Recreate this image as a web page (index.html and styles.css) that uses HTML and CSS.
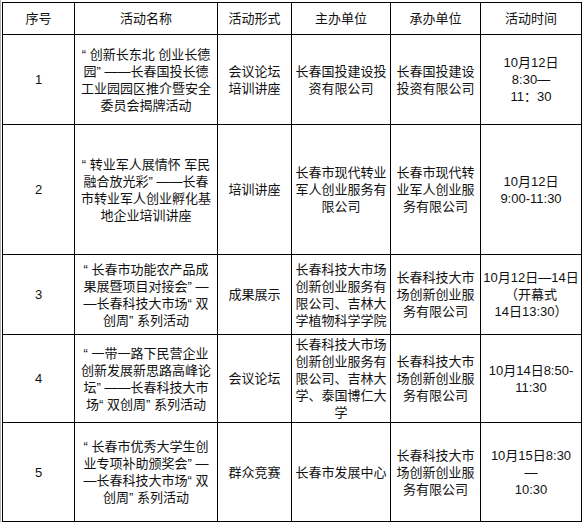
FILE: index.html
```html
<!DOCTYPE html>
<html lang="zh-CN">
<head>
<meta charset="utf-8">
<title>活动安排</title>
<link rel="stylesheet" href="styles.css">
</head>
<body>
<div class="page">
<table class="grid">
  <colgroup>
    <col class="c-no">
    <col class="c-name">
    <col class="c-form">
    <col class="c-host">
    <col class="c-org">
    <col class="c-time">
  </colgroup>
  <tr class="r-head">
    <td>序号</td><td>活动名称</td><td>活动形式</td><td>主办单位</td><td>承办单位</td><td>活动时间</td>
  </tr>
  <tr class="r1">
    <td>1</td>
    <td>“ 创新长东北 创业长德<br>园” ——长春国投长德<br>工业园园区推介暨安全<br>委员会揭牌活动</td>
    <td>会议论坛<br>培训讲座</td>
    <td>长春国投建设投<br>资有限公司</td>
    <td>长春国投建设<br>投资有限公司</td>
    <td>10月12日<br>8:30—<br>11：30</td>
  </tr>
  <tr class="r2">
    <td>2</td>
    <td>“ 转业军人展情怀 军民<br>融合放光彩” ——长春<br>市转业军人创业孵化基<br>地企业培训讲座</td>
    <td>培训讲座</td>
    <td>长春市现代转业<br>军人创业服务有<br>限公司</td>
    <td>长春市现代转<br>业军人创业服<br>务有限公司</td>
    <td>10月12日<br>9:00-11:30</td>
  </tr>
  <tr class="r3">
    <td>3</td>
    <td>“ 长春市功能农产品成<br>果展暨项目对接会” —<br>—长春科技大市场“ 双<br>创周” 系列活动</td>
    <td>成果展示</td>
    <td>长春科技大市场<br>创新创业服务有<br>限公司、吉林大<br>学植物科学学院</td>
    <td>长春科技大市<br>场创新创业服<br>务有限公司</td>
    <td>10月12日—14日<br>（开幕式<br>14日13:30）</td>
  </tr>
  <tr class="r4">
    <td>4</td>
    <td>“ 一带一路下民营企业<br>创新发展新思路高峰论<br>坛” ——长春科技大市<br>场“ 双创周” 系列活动</td>
    <td>会议论坛</td>
    <td>长春科技大市场<br>创新创业服务有<br>限公司、吉林大<br>学、泰国博仁大<br>学</td>
    <td>长春科技大市<br>场创新创业服<br>务有限公司</td>
    <td>10月14日8:50-<br>11:30</td>
  </tr>
  <tr class="r5">
    <td>5</td>
    <td>“ 长春市优秀大学生创<br>业专项补助颁奖会” —<br>—长春科技大市场“ 双<br>创周” 系列活动</td>
    <td>群众竞赛</td>
    <td>长春市发展中心</td>
    <td>长春科技大市<br>场创新创业服<br>务有限公司</td>
    <td>10月15日8:30<br>—<br>10:30</td>
  </tr>
</table>
</div>
</body>
</html>
```

FILE: styles.css
```css
html, body {
  margin: 0;
  padding: 0;
  background: #fff;
}

.page {
  border-left: 1px solid #b4b4b4;
  padding: 2px 0 0 1px;
  min-height: 522px;
  box-sizing: border-box;
}

.grid {
  border-collapse: collapse;
  table-layout: fixed;
  width: 579px;
  font-family: "Liberation Sans", "Noto Sans CJK SC", sans-serif;
  font-size: 13px;
  line-height: 17px;
  color: #111;
}

.grid td {
  border: 1px solid #000;
  padding: 0 2px;
  text-align: center;
  vertical-align: middle;
  white-space: nowrap;
  overflow: hidden;
}

.c-no { width: 72px; }
.c-name { width: 143px; }
.c-form { width: 74px; }
.c-host { width: 99px; }
.c-org { width: 90px; }
.c-time { width: 101px; }

.r-head { height: 32px; }
.r1 { height: 90px; }
.r2 { height: 130px; }
.r3 { height: 80px; }
.r4 { height: 88px; }
.r5 { height: 99px; }
```
